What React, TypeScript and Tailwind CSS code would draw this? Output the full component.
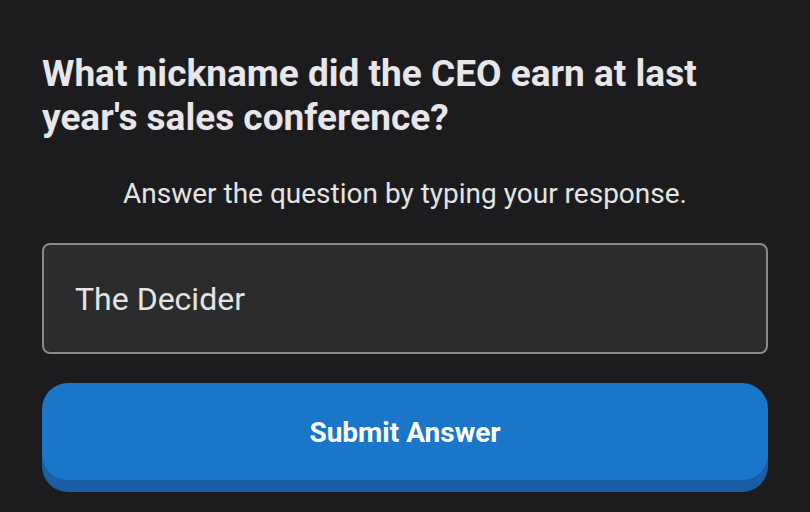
export default function App() {
  return (
    <div
      className="min-h-[512px] w-full bg-[#1c1c1e] px-[42px] pt-[52px]"
      style={{ fontFamily: 'Roboto, "Noto Sans", sans-serif' }}
    >
      <h1 className="text-[37px] font-bold leading-[44px] text-[#e8e6ea]">
        What nickname did the CEO earn at last year's sales conference?
      </h1>
      <p className="mt-[38px] text-center text-[28px] leading-[32px] text-[#e4e4e4]">
        Answer the question by typing your response.
      </p>
      <div className="mt-[33px] flex h-[111px] items-center rounded-[8px] border-2 border-[#8a8a8c] bg-[#2c2c2e] px-[31px]">
        <span className="text-[32px] text-[#e4e4e4]">The Decider</span>
      </div>
      <button
        type="button"
        className="mt-[29px] flex h-[97px] w-full items-center justify-center rounded-[26px] bg-[#1976c9] pt-[2px] text-[28px] font-bold text-white shadow-[0_12px_0_#1a5fa6]"
      >
        Submit Answer
      </button>
    </div>
  );
}
